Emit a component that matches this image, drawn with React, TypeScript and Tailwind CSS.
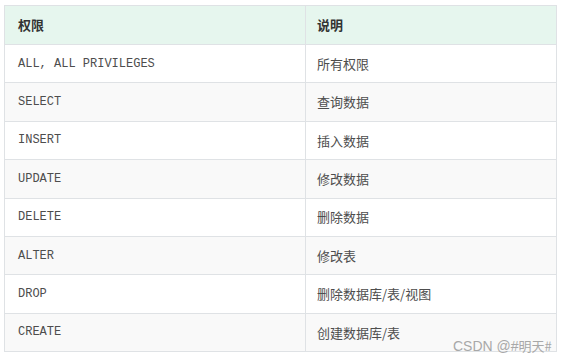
import React from "react";

const rows: [string, string][] = [
  ["ALL, ALL PRIVILEGES", "所有权限"],
  ["SELECT", "查询数据"],
  ["INSERT", "插入数据"],
  ["UPDATE", "修改数据"],
  ["DELETE", "删除数据"],
  ["ALTER", "修改表"],
  ["DROP", "删除数据库/表/视图"],
  ["CREATE", "创建数据库/表"],
];

const cjk = "font-['Noto_Sans_CJK_SC','Noto_Sans',sans-serif]";

export default function App() {
  return (
    <div className="relative w-[564px] h-[364px] bg-white overflow-hidden">
      <div className="pt-[5px] pl-[4px]">
        <div className="w-[553px] border-l border-t border-r border-[#dfe2e5]">
          <div className="flex h-[39px] bg-[#e6f6ee] border-b border-[#dfe2e5]">
            <div className={`w-[301px] border-r border-[#dfe2e5] pl-[13px] flex items-center text-[13px] font-bold text-[#333] ${cjk}`}>
              权限
            </div>
            <div className={`flex-1 pl-[11px] flex items-center text-[13px] font-bold text-[#333] ${cjk}`}>
              说明
            </div>
          </div>
          {rows.map(([a, b], i) => (
            <div
              key={a}
              className={`flex h-[38.375px] border-b border-[#dfe2e5] ${i % 2 === 1 ? "bg-[#f9f9f9]" : "bg-white"}`}
            >
              <div className="w-[301px] border-r border-[#dfe2e5] pl-[13px] flex items-center text-[12px] text-[#4d4d4d] font-['Liberation_Mono',monospace]">
                {a}
              </div>
              <div className={`flex-1 pl-[11px] flex items-center text-[13px] text-[#4d4d4d] ${cjk}`}>
                {b}
              </div>
            </div>
          ))}
        </div>
      </div>
      <div className={`absolute left-[453px] top-[336px] text-[13px] text-[#a8a8a8] ${cjk}`}>
        <span className="font-['Liberation_Sans',sans-serif] text-[14px]">CSDN @#</span>明天#
      </div>
    </div>
  );
}
